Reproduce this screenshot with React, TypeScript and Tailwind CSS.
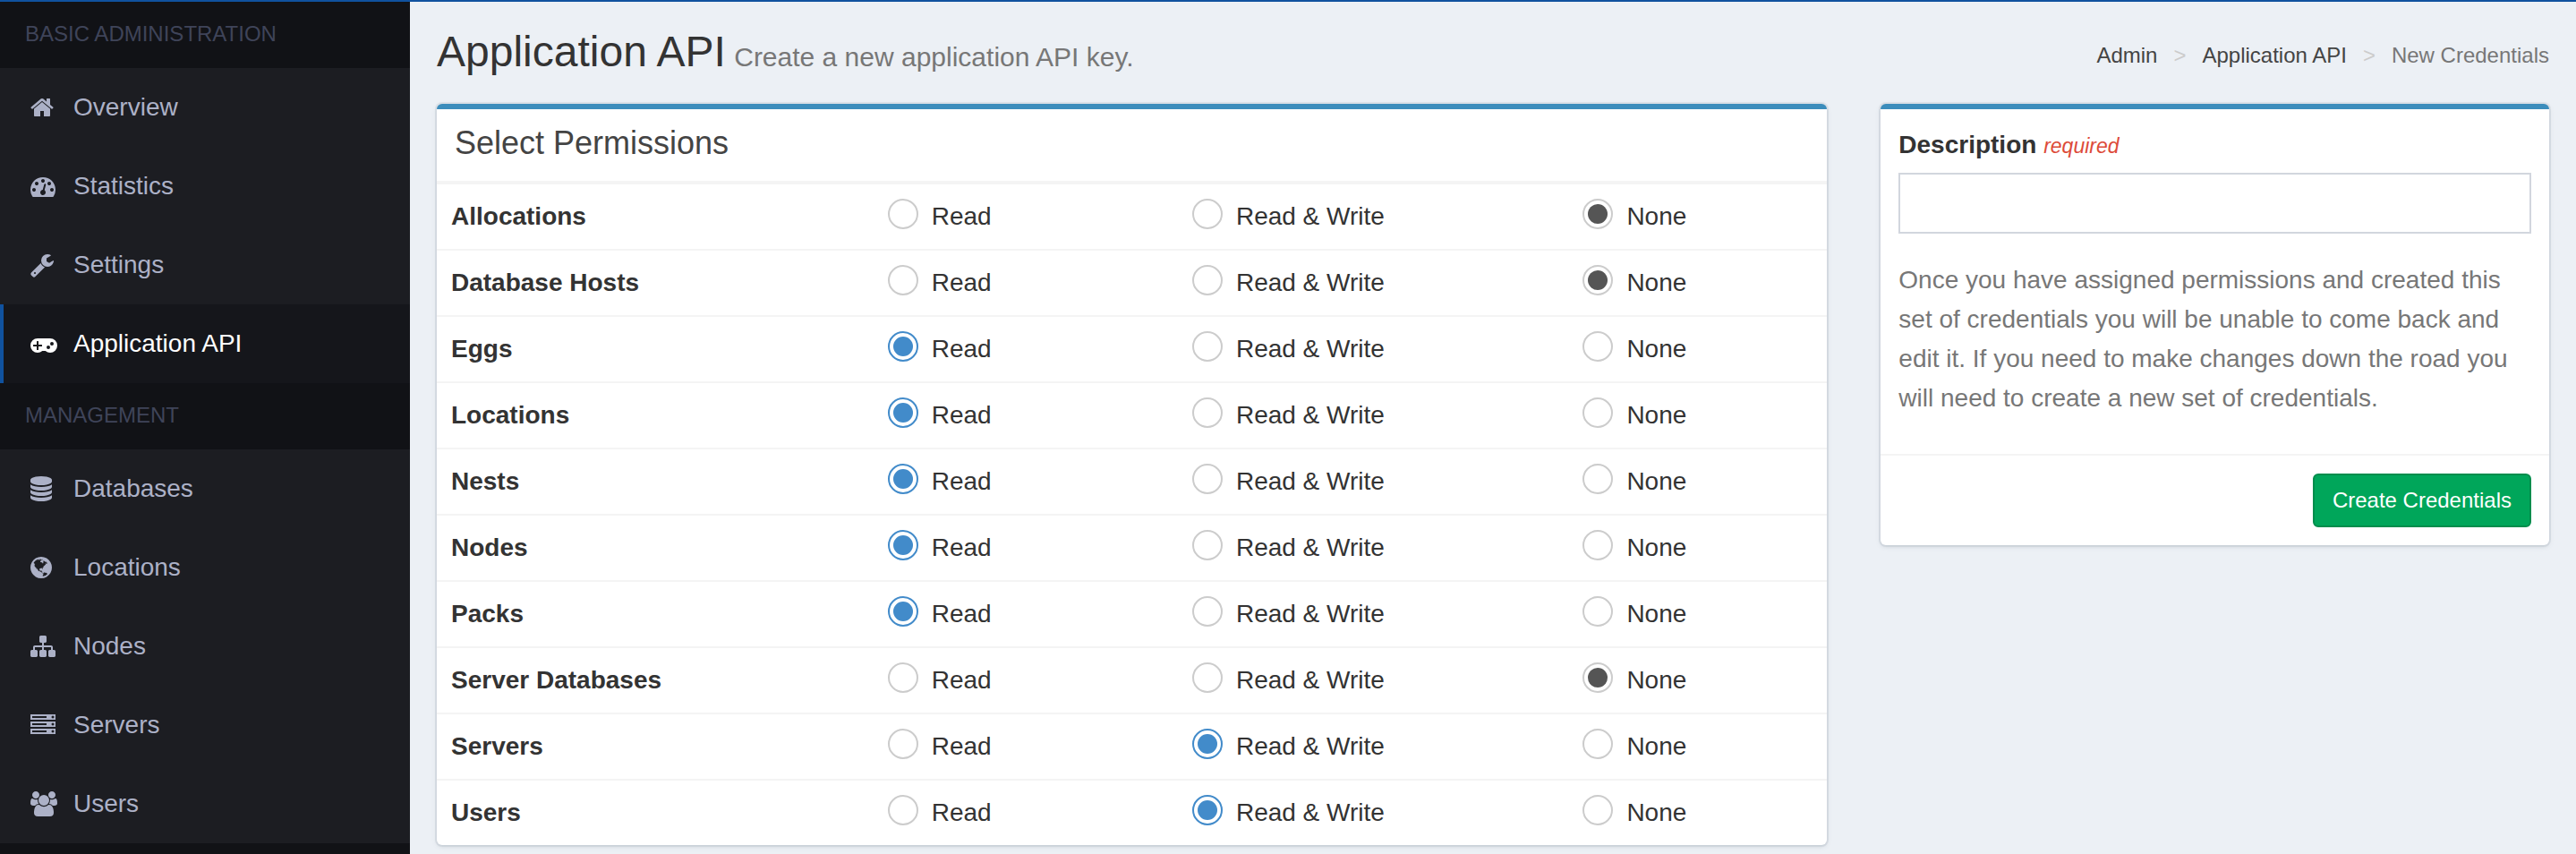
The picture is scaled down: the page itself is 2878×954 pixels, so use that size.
import { useState } from "react";

type Level = "Read" | "Read & Write" | "None";

const levels: Level[] = ["Read", "Read & Write", "None"];

const resources: { name: string; level: Level }[] = [
  { name: "Allocations", level: "None" },
  { name: "Database Hosts", level: "None" },
  { name: "Eggs", level: "Read" },
  { name: "Locations", level: "Read" },
  { name: "Nests", level: "Read" },
  { name: "Nodes", level: "Read" },
  { name: "Packs", level: "Read" },
  { name: "Server Databases", level: "None" },
  { name: "Servers", level: "Read & Write" },
  { name: "Users", level: "Read & Write" },
];

type Glyph = { viewBox: string; d: string };

const home: Glyph = {
  viewBox: "64 0 1664 1792",
  d: "M1472 992v480q0 26-19 45t-45 19h-384v-384h-256v384h-384q-26 0-45-19t-19-45v-480q0-1 .5-3t.5-3l575-474 575 474q1 2 1 6zm223-69l-62 74q-8 9-21 11h-3q-13 0-21-7l-692-577-692 577q-12 8-24 7-13-2-21-11l-62-74q-8-10-7-23.5t11-21.5l719-599q32-26 76-26t76 26l244 204v-195q0-14 9-23t23-9h192q14 0 23 9t9 23v408l219 182q10 8 11 21.5t-7 23.5z",
};

const tachometer: Glyph = {
  viewBox: "0 0 1792 1792",
  d: "M384 1152q0-53-37.5-90.5t-90.5-37.5-90.5 37.5-37.5 90.5 37.5 90.5 90.5 37.5 90.5-37.5 37.5-90.5zm192-448q0-53-37.5-90.5t-90.5-37.5-90.5 37.5-37.5 90.5 37.5 90.5 90.5 37.5 90.5-37.5 37.5-90.5zm428 481l101-382q6-26-7.5-48.5t-38.5-29.5-48 6.5-30 39.5l-101 382q-60 5-107 43.5t-63 98.5q-20 77 20 146t117 89 146-20 89-117q16-60-6-117t-72-91zm660-33q0-53-37.5-90.5t-90.5-37.5-90.5 37.5-37.5 90.5 37.5 90.5 90.5 37.5 90.5-37.5 37.5-90.5zm-640-640q0-53-37.5-90.5t-90.5-37.5-90.5 37.5-37.5 90.5 37.5 90.5 90.5 37.5 90.5-37.5 37.5-90.5zm448 192q0-53-37.5-90.5t-90.5-37.5-90.5 37.5-37.5 90.5 37.5 90.5 90.5 37.5 90.5-37.5 37.5-90.5zm320 448q0 261-141 483-19 29-54 29h-1402q-35 0-54-29-141-221-141-483 0-182 71-348t191-286 286-191 348-71 348 71 286 191 191 286 71 348z",
};

const wrench: Glyph = {
  viewBox: "64 0 1664 1792",
  d: "M448 1472q0-26-19-45t-45-19-45 19-19 45 19 45 45 19 45-19 19-45zm644-420l-682 682q-37 37-90 37-52 0-91-37l-106-108q-38-36-38-90 0-53 38-91l681-681q39 98 114.5 173.5t173.5 114.5zm634-435q0 39-23 106-47 134-164.5 217.5t-258.5 83.5q-185 0-316.5-131.5t-131.5-316.5 131.5-316.5 316.5-131.5q58 0 121.5 16.5t107.5 46.5q16 11 16 28t-16 28l-293 169v224l193 107q5-3 79-48.5t135.5-81 70.5-35.5q15 0 23.5 10t8.5 25z",
};

const gamepad: Glyph = {
  viewBox: "0 0 1920 1792",
  d: "M512 512h896a512 512 0 0 1 0 1024q-193 0-338-128h-220q-145 128-338 128a512 512 0 0 1 0-1024zM448 736v224h-224q-32 0-32 32v64q0 32 32 32h224v224q0 32 32 32h64q32 0 32-32v-224h224q32 0 32-32v-64q0-32-32-32h-224v-224q0-32-32-32h-64q-32 0-32 32zM1280 1024a128 128 0 1 0 0 256a128 128 0 1 0 0-256zM1536 768a128 128 0 1 0 0 256a128 128 0 1 0 0-256z",
};

const database: Glyph = {
  viewBox: "128 0 1536 1792",
  d: "M896 768q237 0 443-43t325-127v170q0 69-103 128t-280 93.5-385 34.5-385-34.5-280-93.5-103-128v-170q119 84 325 127t443 43zm0 768q237 0 443-43t325-127v170q0 69-103 128t-280 93.5-385 34.5-385-34.5-280-93.5-103-128v-170q119 84 325 127t443 43zm0-384q237 0 443-43t325-127v170q0 69-103 128t-280 93.5-385 34.5-385-34.5-280-93.5-103-128v-170q119 84 325 127t443 43zm0-1152q208 0 385 34.5t280 93.5 103 128v128q0 69-103 128t-280 93.5-385 34.5-385-34.5-280-93.5-103-128v-128q0-69 103-128t280-93.5 385-34.5z",
};

const globe: Glyph = {
  viewBox: "128 0 1536 1792",
  d: "M896 128q209 0 385.5 103t279.5 279.5 103 385.5-103 385.5-279.5 279.5-385.5 103-385.5-103-279.5-279.5-103-385.5 103-385.5 279.5-279.5 385.5-103zm274 521q-2 1-9.5 9.5t-13.5 9.5q2 0 4.5-5t5-11 3.5-7q6-7 22-15 14-6 52-12 34-8 51 11-2-2 9.5-13t14.5-12q3-2 15-4.5t15-7.5l2-22q-12 1-17.5-7t-6.5-21q0 2-6 8 0-7-4.5-8t-11.5 1-9 1q-10-3-15-7.5t-8-16.5-4-15q-2-5-9.5-11t-9.5-10q-1-2-2.5-5.5t-3-6.5-4-5.5-5.5-2.5-7 5-7.5 10-4.5 5q-3-2-6-1.5t-4.5 1-4.5 3-5 3.5q-3 2-8.5 3t-8.5 2q15-5-1-11-10-4-16-3 9-4 7.5-12t-8.5-14h5q-1-4-8.5-8.5t-17.5-8.5-13-6q-8-5-34-9.5t-33-.5q-5 6-4.5 10.5t4 14 3.5 12.5q1 6-5.5 13t-6.5 12q0 7 14 15.5t10 21.5q-3 8-16 16t-16 12q-5 8-1.5 18.5t10.5 16.5q2 2 1.5 4t-3.5 4.5-5.5 4-6.5 3.5l-3 2q-11 5-20.5-6t-13.5-26q-7-25-16-30-23-8-29 1-5-13-41-26-25-9-58-4 6-1 0-15-7-15-19-12 3-6 4-17.5t1-13.5q3-13 12-23 1-1 7-8.5t9.5-13.5.5-6q35 4 50-11 5-5 11.5-17t10.5-17q9-6 14-5.5t14.5 5.5 14.5 5q14 1 15.5-11t-7.5-20q12 1 3-17-4-7-8-9-12-4-27 5-8 4 2 8-1-1-9.5 10.5t-16.5 17.5-16-5q-1-1-5.5-13.5t-9.5-13.5q-8 0-16 15 3-8-11-15t-24-8q19-12-8-27-7-4-20.5-5t-19.5 4q-5 7-5.5 11.5t5 8 10.5 5.5 11.5 4 8.5 3q14 10 8 14-2 1-8.5 3.5t-11.5 4.5-6 4q-3 4 0 14t-2 14q-5-5-9-17.5t-7-16.5q7 9-25 6l-10-1q-4 0-16 2t-20.5 1-13.5-8q-4-8 0-20 1-4 4-2-4-3-11-9.5t-10-8.5q-46 15-94 41 6 1 12-1 5-2 13-6.5t10-5.5q34-14 42-7l5-5q14 16 20 25-7-4-30-1-20 6-22 12 7 12 5 18-4-3-11.5-10t-14.5-11-15-5q-16 0-22 1-146 80-235 222 7 7 12 8 4 1 5 9t2.5 11 11.5-3q9 8 3 19 1-1 44 27 19 17 21 21 3 11-10 18-1-2-9-9t-9-4q-3 5 .5 18.5t10.5 12.5q-7 0-9.5 16t-2.5 35.5-1 23.5l2 1q-3 12 5.5 34.5t21.5 19.5q-13 3 20 43 6 8 8 9 3 2 12 7.5t15 10 10 10.5q4 5 10 22.5t14 23.5q-2 6 9.5 20t10.5 23q-1 0-2.5 1t-2.5 1q3 7 15.5 14t15.5 13q1 3 2 10t3 11 8 2q2-20-24-62-15-25-17-29-3-5-5.5-15.5t-4.5-14.5q2 0 6 1.5t8.5 3.5 7.5 4 2 3q-3 7 2 17.5t12 18.5 17 19 12 13q6 6 14 19.5t0 13.5q9 0 20 10.5t17 19.5q5 8 8 26t5 24q2 7 8.5 13.5t12.5 9.5l16 8 13 7q5 2 18.5 10.5t21.5 11.5q10 4 16 4t14.5-2.5 13.5-3.5q15-2 29 15t21 21q36 19 55 11-2 1 .5 7.5t8 15.5 9 14.5 5.5 8.5q5 6 18 15t18 15q6-4 7-9-3 8 7 20t18 10q14-3 14-32-31 15-49-18 0-1-2.5-5.5t-4-8.5-2.5-8.5 0-7.5 5-3q9 0 10-3.5t-2-12.5-4-13q-1-8-11-20t-12-15q-5 9-16 8t-16-9q0 1-1.5 5.5t-1.5 6.5q-13 0-15-1 1-3 2.5-17.5t3.5-22.5q1-4 5.5-12t7.5-14.5 4-12.5-4.5-9.5-17.5-2.5q-19 1-26 20-1 3-3 10.5t-5 11.5-9 7q-7 3-24 2t-24-5q-13-8-22.5-29t-9.5-37q0-10 2.5-26.5t3-25-5.5-24.5q3-2 9-9.5t10-10.5q2-1 4.5-1.5t4.5 0 4-1.5 3-6q-1-1-4-3-3-3-4-3 7 3 28.5-1.5t27.5 1.5q15 11 22-2 0-1-2.5-9.5t-.5-13.5q5 27 29 9 3 3 15.5 5t17.5 5q3 2 7 5.5t5.5 4.5 5-.5 8.5-6.5q10 14 12 24 11 40 19 44 7 3 11 2t4.5-9.5 0-14-1.5-12.5l-1-8v-18l-1-8q-15-3-18.5-12t1.5-18.5 15-18.5q1-1 8-3.5t15.5-6.5 12.5-8q21-19 15-35 7 0 11-9-1 0-5-3t-7.5-5-4.5-2q9-5 2-16 5-3 7.5-11t7.5-10q9 12 21 2 8-8 1-16 5-7 20.5-10.5t18.5-9.5q7 2 8-2t1-12 3-12q4-5 15-9t13-5l17-11q3-4 0-4 18 2 31-11 10-11-6-20 3-6-3-9.5t-15-5.5q3-1 11.5-.5t10.5-1.5q15-10-7-16-17-5-43 12zm-163 877q206-36 351-189-3-3-12.5-4.5t-12.5-3.5q-18-7-24-8 1-7-2.5-13t-8-9-12.5-8-11-7q-2-2-7-6t-7-5.5-7.5-4.5-8.5-2-10 1l-3 1q-3 1-5.5 2.5t-5.5 3-4 3 0 2.5q-21-17-36-22-5-1-11-5.5t-10.5-7-10-1.5-11.5 7q-5 5-6 15t-2 13q-7-5 0-17.5t2-18.5q-3-6-10.5-4.5t-12 4.5-11.5 8.5-9 6.5-8.5 5.5-8.5 7.5q-3 4-6 12t-5 11q-2-4-11.5-6.5t-9.5-5.5q2 10 4 35t5 38q7 31-12 48-27 25-29 40-4 22 12 26 0 7-8 20.5t-7 21.5q0 6 2 16z",
};

const sitemap: Glyph = {
  viewBox: "0 0 1792 1792",
  d: "M1792 1248v320q0 40-28 68t-68 28h-320q-40 0-68-28t-28-68v-320q0-40 28-68t68-28h96v-192h-512v192h96q40 0 68 28t28 68v320q0 40-28 68t-68 28h-320q-40 0-68-28t-28-68v-320q0-40 28-68t68-28h96v-192h-512v192h96q40 0 68 28t28 68v320q0 40-28 68t-68 28h-320q-40 0-68-28t-28-68v-320q0-40 28-68t68-28h96v-192q0-52 38-90t90-38h512v-192h-96q-40 0-68-28t-28-68v-320q0-40 28-68t68-28h320q40 0 68 28t28 68v320q0 40-28 68t-68 28h-96v192h512q52 0 90 38t38 90v192h96q40 0 68 28t28 68z",
};

const server: Glyph = {
  viewBox: "0 0 1792 1792",
  d: "M128 1408h1024v-128h-1024v128zm0-512h1024v-128h-1024v128zm1568 448q0-40-28-68t-68-28-68 28-28 68 28 68 68 28 68-28 28-68zm-1568-960h1024v-128h-1024v128zm1568 448q0-40-28-68t-68-28-68 28-28 68 28 68 68 28 68-28 28-68zm0-512q0-40-28-68t-68-28-68 28-28 68 28 68 68 28 68-28 28-68zm96 832v384h-1792v-384h1792zm0-512v384h-1792v-384h1792zm0-512v384h-1792v-384h1792z",
};

const users: Glyph = {
  viewBox: "-64 0 1920 1792",
  d: "M529 896q-162 5-265 128h-134q-82 0-138-40.5t-56-118.5q0-353 124-353 6 0 43.5 21t97.5 42.5 119 21.5q67 0 133-23-5 37-5 66 0 139 81 256zm1071 637q0 120-73 189.5t-194 69.5h-874q-121 0-194-69.5t-73-189.5q0-53 3.5-103.5t14-109 26.5-108.5 43-97.5 62-81 85.5-53.5 111.5-20q10 0 43 21.5t73 48 107 48 135 21.5 135-21.5 107-48 73-48 43-21.5q61 0 111.5 20t85.5 53.5 62 81 43 97.5 26.5 108.5 14 109 3.5 103.5zm-1024-1277q0 106-75 181t-181 75-181-75-75-181 75-181 181-75 181 75 75 181zm704 384q0 159-112.5 271.5t-271.5 112.5-271.5-112.5-112.5-271.5 112.5-271.5 271.5-112.5 271.5 112.5 112.5 271.5zm576 225q0 78-56 118.5t-138 40.5h-134q-103-123-265-128 81-117 81-256 0-29-5-66 66 23 133 23 59 0 119-21.5t97.5-42.5 43.5-21q124 0 124 353zm-128-609q0 106-75 181t-181 75-181-75-75-181 75-181 181-75 181 75 75 181z",
};

const sections = [
  {
    title: "BASIC ADMINISTRATION",
    items: [
      { label: "Overview", icon: home },
      { label: "Statistics", icon: tachometer },
      { label: "Settings", icon: wrench },
      { label: "Application API", icon: gamepad },
    ],
  },
  {
    title: "MANAGEMENT",
    items: [
      { label: "Databases", icon: database },
      { label: "Locations", icon: globe },
      { label: "Nodes", icon: sitemap },
      { label: "Servers", icon: server },
      { label: "Users", icon: users },
    ],
  },
];

function Icon({ glyph }: { glyph: Glyph }) {
  return (
    <svg viewBox={glyph.viewBox} className="h-7 w-auto" fill="currentColor" fillRule="evenodd" aria-hidden="true">
      <path d={glyph.d} />
    </svg>
  );
}

function Sidebar() {
  return (
    <nav className="w-[458px] shrink-0 bg-[#111216]">
      {sections.map((section) => (
        <div key={section.title}>
          <h2 className="px-7 pt-5 pb-[22px] text-2xl leading-8 text-[#3f4459]">{section.title}</h2>
          <ul>
            {section.items.map((item) => {
              const active = item.label === "Application API";
              return (
                <li key={item.label}>
                  <a
                    href="#"
                    aria-current={active ? "page" : undefined}
                    className={
                      active
                        ? "flex h-[88px] items-center gap-2 border-l-4 border-[#10529f] bg-[#15161b] pl-[30px] text-[28px] text-white"
                        : "flex h-[88px] items-center gap-2 border-l-4 border-transparent bg-[#1c1d22] pl-[30px] text-[28px] text-[#acb1c7]"
                    }
                  >
                    <span className="flex w-10">
                      <Icon glyph={item.icon} />
                    </span>
                    <span>{item.label}</span>
                  </a>
                </li>
              );
            })}
          </ul>
        </div>
      ))}
    </nav>
  );
}

const cardClass =
  "overflow-hidden rounded-md border-t-[6px] border-[#3c8dbc] bg-white shadow-[0_0_0_2px_rgba(89,105,128,0.1),0_2px_6px_0_rgba(89,105,128,0.1),0_2px_4px_0_rgba(0,0,0,0.05)]";

function PermissionRow({ name, initial }: { name: string; initial: Level }) {
  const [level, setLevel] = useState<Level>(initial);
  return (
    <tr className="border-t-2 border-[#f4f4f4]">
      <th scope="row" className="px-4 py-4 text-left font-bold">
        {name}
      </th>
      {levels.map((option) => (
        <td key={option} className="px-4 py-4">
          <label className="flex items-start gap-[15px]">
            <input
              type="radio"
              name={name}
              value={option}
              checked={level === option}
              onChange={() => setLevel(option)}
              className={
                option === "None"
                  ? "flex size-[34px] shrink-0 appearance-none items-center justify-center rounded-full border-2 border-[#cccccc] bg-white before:size-[22px] before:rounded-full checked:before:bg-[#555555]"
                  : "flex size-[34px] shrink-0 appearance-none items-center justify-center rounded-full border-2 border-[#cccccc] bg-white before:size-[22px] before:rounded-full checked:border-[#428bca] checked:before:bg-[#428bca]"
              }
            />
            <span>{option}</span>
          </label>
        </td>
      ))}
    </tr>
  );
}

function PermissionsCard() {
  return (
    <section className={cardClass}>
      <h3 className="border-b-2 border-[#f4f4f4] px-5 pt-5 pb-6 text-4xl leading-9 text-[#444444]">
        Select Permissions
      </h3>
      <table className="w-full table-fixed border-collapse text-[28px] leading-10">
        <colgroup>
          <col className="w-[31.4%]" />
          <col className="w-[21.9%]" />
          <col className="w-[28.1%]" />
          <col />
        </colgroup>
        <tbody>
          {resources.map((resource) => (
            <PermissionRow key={resource.name} name={resource.name} initial={resource.level} />
          ))}
        </tbody>
      </table>
    </section>
  );
}

function DescriptionCard() {
  return (
    <section className={cardClass}>
      <div className="px-5 pt-5 pb-10">
        <label htmlFor="memo" className="mb-2.5 block text-[28px] leading-10 font-bold">
          Description <span className="text-[23px] font-normal text-[#dd4b39] italic">required</span>
        </label>
        <input
          id="memo"
          type="text"
          className="mb-[30px] block h-[68px] w-full border-2 border-[#d2d6de] bg-white px-6 text-[28px] text-[#555555] outline-none"
        />
        <p className="text-[28px] leading-[44px] text-[#777777]">
          Once you have assigned permissions and created this set of credentials you will be unable to come back and
          edit it. If you need to make changes down the road you will need to create a new set of credentials.
        </p>
      </div>
      <div className="flex justify-end border-t-2 border-[#f4f4f4] p-5">
        <button
          type="submit"
          className="h-[60px] rounded-md border-2 border-[#008d4c] bg-[#00a65a] px-5 text-2xl text-white"
        >
          Create Credentials
        </button>
      </div>
    </section>
  );
}

export default function App() {
  return (
    <div className="flex min-h-screen flex-col border-t-2 border-[#10529f] bg-[#ecf0f5] font-['Helvetica_Neue','Liberation_Sans',Arial,sans-serif] text-[#333333]">
      <div className="flex grow">
        <Sidebar />
        <main className="min-w-0 grow">
          <header className="flex items-start justify-between px-[30px] pt-8 pb-[34px]">
            <h1 className="text-5xl leading-[48px]">
              Application API{" "}
              <small className="-ml-1 text-[30px] leading-none font-light text-[#777777]">
                Create a new application API key.
              </small>
            </h1>
            <nav aria-label="Breadcrumb" className="pt-3">
              <ol className="flex text-2xl leading-8 text-[#444444]">
                <li>
                  <a href="#">Admin</a>
                </li>
                <li>
                  <span className="px-[18px] text-[#cccccc]">&gt;</span>
                  <a href="#">Application API</a>
                </li>
                <li className="text-[#777777]">
                  <span className="px-[18px] text-[#cccccc]">&gt;</span>
                  New Credentials
                </li>
              </ol>
            </nav>
          </header>
          <form className="flex items-start" onSubmit={(event) => event.preventDefault()}>
            <div className="w-2/3 px-[30px]">
              <PermissionsCard />
            </div>
            <div className="w-1/3 px-[30px]">
              <DescriptionCard />
            </div>
          </form>
        </main>
      </div>
    </div>
  );
}
